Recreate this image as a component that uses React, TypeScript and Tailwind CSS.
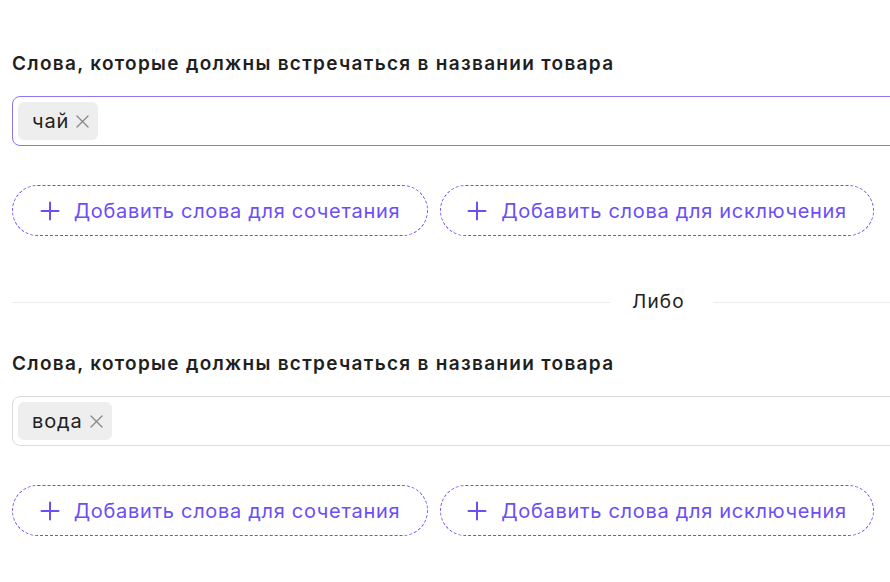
import React from "react";

const font = { fontFamily: "Inter, 'Noto Sans', sans-serif" };

function Plus() {
  return (
    <svg width="20" height="20" viewBox="0 0 20 20" fill="none" stroke="currentColor" strokeWidth="2" strokeLinecap="round">
      <path d="M10 1.5v17M1.5 10h17" />
    </svg>
  );
}

function Cross() {
  return (
    <svg width="13" height="13" viewBox="0 0 13 13" fill="none" stroke="#8a8a8a" strokeWidth="1.4" strokeLinecap="round">
      <path d="M1 1l11 11M12 1L1 12" />
    </svg>
  );
}

function Section({ word, active }: { word: string; active: boolean }) {
  return (
    <div className="flex flex-col">
      <div className="text-[19px] leading-[24px] font-semibold text-[#1f1f1f] tracking-[1.3px]">
        Слова, которые должны встречаться в названии товара
      </div>
      <div
        className={
          "mt-[20px] h-[50px] w-[900px] rounded-[8px] border flex items-center px-[5px] " +
          (active ? "border-[#8f74f5]" : "border-[#dcdcdc]")
        }
      >
        <div className="h-[38px] rounded-[6px] bg-[#eeeeee] flex items-center pl-[14px] pr-[9px] gap-[7px]">
          <span className="text-[20px] tracking-[0.9px] text-[#222] leading-none">{word}</span>
          <Cross />
        </div>
      </div>
      <div className="mt-[39px] flex gap-[12px]">
        <button className="h-[51px] w-[416px] rounded-full border border-dashed border-[#6b4ef5] flex items-center justify-center gap-[14px] text-[#6b4ef5] text-[20px] tracking-[0.7px]">
          <Plus />
          <span>Добавить слова для сочетания</span>
        </button>
        <button className="h-[51px] w-[434px] rounded-full border border-dashed border-[#6b4ef5] flex items-center justify-center gap-[14px] text-[#6b4ef5] text-[20px] tracking-[0.7px]">
          <Plus />
          <span>Добавить слова для исключения</span>
        </button>
      </div>
    </div>
  );
}

export default function App() {
  return (
    <div className="w-[890px] h-[582px] overflow-hidden bg-white" style={font}>
      <div className="pl-[12px] pt-[52px] w-[1000px]">
        <Section word="чай" active />
        <div className="mt-[54px] flex items-center w-[878px]">
          <div className="h-px bg-[#ececec] w-[598px]" />
          <span className="pl-[22px] pr-[28px] text-[19px] tracking-[1.2px] text-[#222] leading-[24px]">Либо</span>
          <div className="h-px bg-[#ececec] flex-1" />
        </div>
        <div className="mt-[38px]">
          <Section word="вода" active={false} />
        </div>
      </div>
    </div>
  );
}
